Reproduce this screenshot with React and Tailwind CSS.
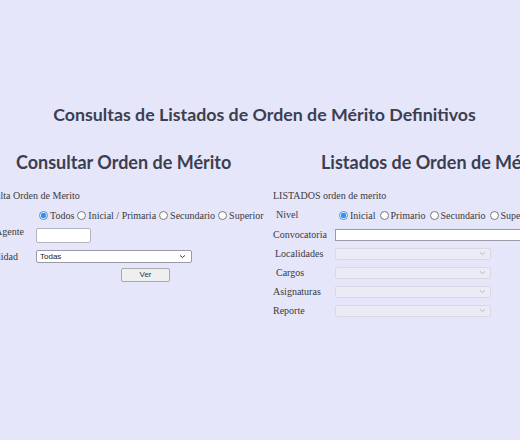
import React from "react";

const serif = "font-['Liberation_Serif','Times_New_Roman',serif]";
const lato = "font-['Lato','Noto_Sans',sans-serif]";

function Radio({ label, checked, name, gap = "ml-[3px]" }) {
  return (
    <label className="flex items-center whitespace-nowrap">
      <input
        type="radio"
        name={name}
        defaultChecked={checked}
        className={`w-[9px] h-[9px] m-0 ${gap} mr-[2px] accent-[#3b8ee8]`}
      />
      <span>{label}</span>
    </label>
  );
}

function Chevron({ className }) {
  return (
    <svg viewBox="0 0 10 6" className={className} fill="none">
      <path d="M1.5 1.5 L5 4.5 L8.5 1.5" stroke="currentColor" strokeWidth="1.4" />
    </svg>
  );
}

function Row({ label, children, h = "h-[19px]", w = "w-[61px]", labelClass = "", className = "" }) {
  return (
    <div className={`flex items-center ${h} ${className}`}>
      <div className={`${w} shrink-0 leading-[12px] ${labelClass}`}>{label}</div>
      <div className="flex items-center">{children}</div>
    </div>
  );
}

function DisabledSelect() {
  return (
    <div className="w-[156px] h-[12px] border border-[#d9d9e4] bg-[#ebebf6] rounded-[2px] flex items-center justify-end pr-[4px]">
      <Chevron className="w-[7px] h-[5px] text-[#b9b9c4]" />
    </div>
  );
}

export default function App() {
  return (
    <div className={`w-[520px] h-[440px] overflow-hidden bg-[#e6e6fa] text-[#3a3a3a] ${serif} text-[10px]`}>
      <h1 className={`pt-[103px] pl-[9px] text-center ${lato} font-bold text-[17.8px] leading-[22px] text-[#3b3f50]`}>
        Consultas de Listados de Orden de Mérito Definitivos
      </h1>

      <div className="flex mt-[26px]">
        {/* Consulta individual */}
        <section className="w-[273px] shrink-0">
          <h2 className={`pl-[16px] ${lato} font-bold text-[18px] leading-[22px] text-[#3b3f50] whitespace-nowrap`}>
            Consultar Orden de Mérito
          </h2>
          <div className="-ml-[25px] mt-[17px]">
            <div className="h-[12px] leading-[12px]">Consulta Orden de Merito</div>
            <Row label="" h="h-[26px]">
              <Radio name="tipo" label="Todos" checked />
              <Radio name="tipo" label="Inicial / Primaria" />
              <Radio name="tipo" label="Secundario" />
              <Radio name="tipo" label="Superior" />
            </Row>
            <Row label="Agente" h="h-[15px]" labelClass="self-start -mt-[2px] pl-[20px]">
              <input
                type="text"
                className="w-[55px] h-[15px] bg-white border border-[#b5b5c0] rounded-[2px] outline-none"
              />
            </Row>
            <Row label="Localidad" h="h-[13px]" className="mt-[7px]" labelClass="pl-[3px]">
              <div className="w-[156px] h-[13px] bg-white border border-[#9a9aa6] rounded-[2px] flex items-center justify-between pl-[3px] pr-[5px] font-['Liberation_Sans',Arial,sans-serif] text-[8px] text-[#222]">
                <span>Todas</span>
                <Chevron className="w-[7px] h-[5px] text-[#333]" />
              </div>
            </Row>
            <div className="flex mt-[5px] h-[14px] items-center">
              <button className="ml-[146px] w-[49px] h-[14px] bg-[#efefef] border border-[#a8a8b0] rounded-[2px] font-['Liberation_Sans',Arial,sans-serif] text-[8px] text-[#333] leading-none">
                Ver
              </button>
            </div>
          </div>
        </section>

        {/* Listados */}
        <section className="flex-1 min-w-0">
          <h2 className={`pl-[48px] ${lato} font-bold text-[18px] leading-[22px] text-[#3b3f50] whitespace-nowrap`}>
            Listados de Orden de Mérito
          </h2>
          <div className="mt-[17px]">
            <div className="h-[12px] leading-[12px]">LISTADOS orden de merito</div>
            <Row label="Nivel" h="h-[20px]" w="w-[62px]" className="mt-[3px]" labelClass="pl-[3px]">
              <Radio name="nivel" label="Inicial" checked gap="ml-[4px]" />
              <Radio name="nivel" label="Primario" gap="ml-[4px]" />
              <Radio name="nivel" label="Secundario" gap="ml-[4px]" />
              <Radio name="nivel" label="Superior" gap="ml-[4px]" />
            </Row>
            <Row label="Convocatoria" w="w-[62px]">
              <input
                type="text"
                className="w-[200px] h-[12px] bg-white border border-[#9a9aa6] outline-none"
              />
            </Row>
            <Row label="Localidades" w="w-[62px]" labelClass="pl-[2px]">
              <DisabledSelect />
            </Row>
            <Row label="Cargos" w="w-[62px]" labelClass="pl-[3px]">
              <DisabledSelect />
            </Row>
            <Row label="Asignaturas" w="w-[62px]">
              <DisabledSelect />
            </Row>
            <Row label="Reporte" w="w-[62px]">
              <DisabledSelect />
            </Row>
          </div>
        </section>
      </div>
    </div>
  );
}
